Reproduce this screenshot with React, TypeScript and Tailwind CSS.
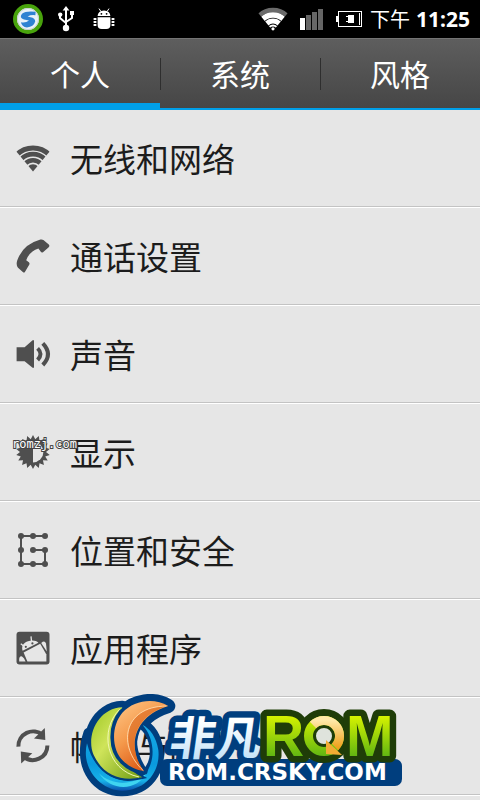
import { useState } from 'react';
import type { ReactNode } from 'react';

type rowType = {
  title: string;
  icon: ReactNode;
};

const tabs = ['个人', '系统', '风格'];

const sunPoints = Array.from({ length: 36 }, (_, i) => {
  const r = i % 2 === 0 ? 17 : 13;
  const a = (i * Math.PI) / 18 - Math.PI / 2;
  return `${(17 + r * Math.cos(a)).toFixed(2)},${(17 + r * Math.sin(a)).toFixed(2)}`;
}).join(' ');

const Icon = ({ children }: { children: ReactNode }) => (
  <svg viewBox="0 0 34 34" className="w-[34px] h-[34px] shrink-0 overflow-visible text-[#4f4f4f]" fill="currentColor" aria-hidden="true">
    {children}
  </svg>
);

const WifiIcon = () => (
  <Icon>
    <clipPath id="wedge">
      <path d="M17 30.5 L-3 6.6 V-4 H37 V6.6Z" />
    </clipPath>
    <g clipPath="url(#wedge)">
      <g fill="none" stroke="currentColor">
        <circle cx="17" cy="30" r="23" strokeWidth="4.8" />
        <circle cx="17" cy="30" r="16.8" strokeWidth="4.8" />
        <circle cx="17" cy="30" r="10.8" strokeWidth="4.4" />
      </g>
      <circle cx="17" cy="30" r="6.8" />
    </g>
  </Icon>
);

const PhoneIcon = () => (
  <Icon>
    <path d="M24.4 .6 Q26 0 27.4 1 L32.8 5.4 Q34 6.8 32.7 8.2 L27 13.2 Q25.6 14 24.8 12.8 L22.4 9.4 Q13.4 12.4 10.2 21.2 L12.9 23.2 Q14 24.4 13.2 25.8 L8.9 33 Q8 34 6.8 33 L2 28.8 Q-.2 26 1.2 21.6 Q6.6 5.6 24.4 .6Z" />
  </Icon>
);

const SoundIcon = () => (
  <Icon>
    <path d="M.6 10.3 H8.6 L16.6 3.2 H18 V30.8 H16.6 L8.6 24.3 H.6Z" />
    <g fill="none" stroke="currentColor">
      <path d="M21.6 11.4 Q27.4 17 21.6 23" strokeWidth="4" />
      <path d="M26.8 6.4 Q37.2 17.2 26.8 28" strokeWidth="4" />
    </g>
  </Icon>
);

const DisplayIcon = () => (
  <Icon>
    <polygon points={sunPoints} />
    <path d="M17 6.6 A10.4 10.4 0 0 1 17 27.4Z" fill="#e6e6e6" />
  </Icon>
);

const LockIcon = () => (
  <Icon>
    <path d="M17 17 H29 V31 H5 V3 H29" fill="none" stroke="currentColor" strokeWidth="2" />
    {[3, 17, 31].map((y) => [5, 17, 29].map((x) => <circle key={`${x}-${y}`} cx={x} cy={y} r="3" />))}
  </Icon>
);

const AppsIcon = () => (
  <Icon>
    <rect x=".5" y=".8" width="33" height="32.6" rx="3" />
    <g fill="#e6e6e6">
      <path d="M6.6 19.8 C5 14.6 8 11.4 12 10.2 C16 9 20.4 9.4 22.4 11.8Z" />
      <path d="M7.6 21.6 L24.2 12.8 L30.4 23.4 V30.4 H11.4Z" />
      <path d="M25.2 12 Q28.6 9 30 12.4 L30.8 20.6Z" />
      <path d="M3.2 30.4 Q2.6 24.8 6 25.4 Q8 26.4 9.6 30.4Z" />
    </g>
    <path d="M8.2 15.4 L4.8 12.8 M15.6 11 L15 5.4" stroke="#e6e6e6" strokeWidth="1.3" />
    <circle cx="9.8" cy="15.8" r="1.1" />
    <circle cx="16.4" cy="12.4" r="1.1" />
  </Icon>
);

const SyncIcon = () => (
  <Icon>
    <g fill="none" stroke="currentColor" strokeWidth="4">
      <path d="M2.4 17.6 A14.6 14.6 0 0 1 26.6 6" />
      <path d="M31.4 16.4 A14.6 14.6 0 0 1 7.4 27.6" />
    </g>
    <path d="M28.8 -1 L29.3 11 L18 9.6Z" />
    <path d="M5.2 34.4 L4.8 22.6 L16.3 24.2Z" />
  </Icon>
);

const rows: rowType[] = [
  { title: '无线和网络', icon: <WifiIcon /> },
  { title: '通话设置', icon: <PhoneIcon /> },
  { title: '声音', icon: <SoundIcon /> },
  { title: '显示', icon: <DisplayIcon /> },
  { title: '位置和安全', icon: <LockIcon /> },
  { title: '应用程序', icon: <AppsIcon /> },
  { title: '帐户与同步', icon: <SyncIcon /> },
];

const StatusBar = () => (
  <header className="h-[38px] bg-black text-white flex items-center justify-between pl-3 pr-[10px]">
    <div className="flex items-center">
      <svg viewBox="0 0 32 32" className="w-8 h-8" aria-hidden="true">
        <circle cx="16" cy="16" r="13" fill="#e9f1f8" stroke="#48a30c" strokeWidth="4" />
        <circle cx="16" cy="16" r="10.6" fill="none" stroke="#c9d2cf" strokeWidth="1" />
        <path d="M23.6 8.8 Q14 7.6 10 10.8 Q6.8 15 12 16.4 L17 17.4 Q13.6 20.2 9 19.2 Q9.6 23.8 15 24.4 Q21.6 24.2 23.2 18.6 Q23.2 14.8 18.6 14.2 L15.6 13.4 Q19 11.6 23.4 12.2Z" fill="#2f82d2" />
      </svg>
      <svg viewBox="0 0 16 26" className="w-4 h-[26px] ml-[14px]" fill="#fff" aria-hidden="true">
        <path d="M8 0 L11.4 4.4 H4.6Z" />
        <circle cx="8" cy="22" r="3.2" />
        <rect x="12" y="5" width="4" height="4" />
        <circle cx="2.2" cy="8.6" r="2.2" />
        <path d="M8 3 V22 M2 9 V12 L8 17 M14 8 V12 L8 16" fill="none" stroke="#fff" strokeWidth="2" />
      </svg>
      <svg viewBox="0 0 22 22" className="w-[22px] h-[22px] ml-[19px]" fill="#fff" aria-hidden="true">
        <path d="M4.6 8 Q5 3 11 2.6 Q17 3 17.4 8Z" />
        <path d="M4.6 9.2 H17.4 V17 Q17.4 21 13.4 21 H8.6 Q4.6 21 4.6 17Z" />
        <path d="M6 .6 L8 3.6 M16 .6 L14 3.6" stroke="#fff" strokeWidth="1" />
        <path d="M.6 11 H3.4 M.6 14 H3.4 M.6 17 H3.4 M18.6 11 H21.4 M18.6 14 H21.4 M18.6 17 H21.4" stroke="#fff" strokeWidth="2" />
        <circle cx="8.4" cy="5.8" r=".9" fill="#000" />
        <circle cx="13.6" cy="5.8" r=".9" fill="#000" />
      </svg>
    </div>
    <div className="flex items-center">
      <svg viewBox="0 0 30 24" className="w-[30px] h-6" aria-hidden="true">
        <clipPath id="signal">
          <path d="M15 24 L-3 2 V-4 H33 V2Z" />
        </clipPath>
        <g clipPath="url(#signal)" fill="none">
          <circle cx="15" cy="23" r="20" stroke="#6b6b6b" strokeWidth="4.4" />
          <circle cx="15" cy="23" r="15" stroke="#fff" strokeWidth="5.6" />
          <circle cx="15" cy="23" r="9" stroke="#fff" strokeWidth="5" />
          <circle cx="15" cy="23" r="4.6" stroke="#fff" strokeWidth="2" />
        </g>
        <circle cx="15" cy="21.8" r="1.6" fill="#fff" />
      </svg>
      <svg viewBox="0 0 24 22" className="w-6 h-[22px] ml-3" fill="#666" aria-hidden="true">
        <rect x="0" y="10" width="5" height="12" fill="#fff" />
        <rect x="6" y="7" width="5" height="15" />
        <rect x="12" y="4" width="5" height="18" />
        <rect x="18" y="1" width="5" height="21" />
      </svg>
      <svg viewBox="0 0 26 16" className="w-[26px] h-4 ml-3" aria-hidden="true">
        <rect x="2.5" y=".5" width="23" height="15" fill="none" stroke="#fff" />
        <rect x="0" y="5" width="2" height="6" fill="#fff" />
        <path d="M23.5 2 V14" stroke="#fff" />
        <path d="M12 4 H18 V12 H12 V11 H10 V10 H12 V6 H10 V5 H12Z" fill="#fff" />
      </svg>
      <time className="ml-2 flex items-center gap-[6px] text-[20px] leading-6 font-['Noto_Sans_CJK_SC',sans-serif]">
        <span>下午</span>
        <span className="text-[21px] font-bold font-['Noto_Sans',sans-serif]">11:25</span>
      </time>
    </div>
  </header>
);

const Logo = () => (
  <svg viewBox="0 0 326 106" className="absolute bottom-0 left-1/2 -translate-x-1/2 w-[326px] h-[106px] pointer-events-none" role="img" aria-label="非凡ROM ROM.CRSKY.COM">
    <defs>
      <linearGradient id="ring" x1="0" y1="0" x2="0" y2="1">
        <stop offset="0" stopColor="#16a9e6" />
        <stop offset=".6" stopColor="#0a9ade" />
        <stop offset=".85" stopColor="#18b2e8" />
        <stop offset="1" stopColor="#0b50ad" />
      </linearGradient>
      <linearGradient id="leaf" x1="0" y1="0" x2="1" y2="1">
        <stop offset="0" stopColor="#9cc722" />
        <stop offset=".4" stopColor="#cfe45a" />
        <stop offset="1" stopColor="#6f9c12" />
      </linearGradient>
      <linearGradient id="flame" x1="0" y1="0" x2=".6" y2="1">
        <stop offset="0" stopColor="#ffc98a" />
        <stop offset=".5" stopColor="#f59a4c" />
        <stop offset="1" stopColor="#d9520f" />
      </linearGradient>
      <linearGradient id="ice" x1="0" y1="0" x2="0" y2="1">
        <stop offset=".3" stopColor="#ffffff" />
        <stop offset="1" stopColor="#b5dcf6" />
      </linearGradient>
      <linearGradient id="lime" gradientUnits="userSpaceOnUse" x1="0" y1="20" x2="0" y2="63">
        <stop offset="0" stopColor="#dcf500" />
        <stop offset="1" stopColor="#5fb512" />
      </linearGradient>
      <linearGradient id="gold" x1="0" y1="0" x2="0" y2="1">
        <stop offset="0" stopColor="#ffe9a8" />
        <stop offset="1" stopColor="#f0a21e" />
      </linearGradient>
      <mask id="hole" maskUnits="userSpaceOnUse" x="-20" y="-20" width="380" height="380">
        <rect x="-20" y="-20" width="380" height="380" fill="#fff" />
        <path d="M182 116 C204 132 214 165 212 195 C210 212 204 224 199 231 C180 200 164 156 182 116Z" fill="#000" />
      </mask>
    </defs>

    {/* swirl */}
    <g transform="translate(2 -4) scale(.33333)">
      <g mask="url(#hole)" fill="#003e7e" stroke="#003e7e" strokeLinejoin="round">
        <path d="M30 130 C-5 235 60 305 130 302 C205 300 245 240 236 180 C230 140 212 115 190 104 C225 150 225 235 170 260 C110 285 45 240 30 130Z" strokeWidth="34" />
        <path d="M130 52 C55 55 20 140 44 195 C75 260 130 275 190 262 C120 225 75 150 130 52Z" strokeWidth="40" />
        <path d="M268 48 C225 22 165 30 130 68 C95 110 98 180 132 212 C150 230 170 240 195 243 C150 185 150 85 268 48Z" strokeWidth="42" />
      </g>
      <path d="M24 160 C5 235 65 302 130 302 C205 300 245 240 238 180 C232 140 212 115 190 104 C232 150 230 225 190 262 C140 290 50 265 24 160Z" fill="url(#ring)" />
      <path d="M60 250 C100 290 170 286 205 246 C176 304 96 306 60 250Z" fill="#3fd4f0" />
      <path d="M130 52 C55 55 20 140 44 195 C75 260 130 275 190 262 C120 225 75 150 130 52Z" fill="url(#leaf)" stroke="#003e7e" strokeWidth="10" />
      <path d="M130 52 C55 55 20 140 44 195 C75 260 130 275 190 262 C120 225 75 150 130 52Z" fill="url(#leaf)" />
      <path d="M122 58 C60 120 80 240 180 261" fill="none" stroke="#f0f7b4" strokeWidth="3" />
      <path d="M195 243 C170 240 150 230 132 212 C98 180 95 110 130 68" fill="none" stroke="#003e7e" strokeWidth="22" strokeLinecap="round" />
      <path d="M195 243 C150 185 150 85 268 48" fill="none" stroke="#003e7e" strokeWidth="14" />
      <path d="M268 48 C225 22 165 30 130 68 C95 110 98 180 132 212 C150 230 170 240 195 243 C150 185 150 85 268 48Z" fill="url(#flame)" />
      <path d="M262 49 C130 50 120 170 193 241 C150 185 150 85 262 49Z" fill="#d8661d" opacity=".6" />
      <path d="M262 48 C130 50 115 170 193 242" fill="none" stroke="#ffe0b5" strokeWidth="2.5" />
    </g>

    <rect x="83" y="65" width="242" height="27" rx="7" fill="#003e7e" />

    <g transform="translate(91 61) skewX(-8)" fontFamily="'Noto Sans CJK SC', sans-serif" fontWeight="700" fontSize="46" strokeLinejoin="round">
      <text x="0" y="0" fill="url(#ice)" stroke="#003e7e" strokeWidth="13" paintOrder="stroke">非凡</text>
    </g>

    <circle cx="247" cy="42" r="20" fill="#1f3d08" stroke="#1f3d08" strokeWidth="14" />
    <g fontFamily="'Liberation Sans', sans-serif" fontWeight="700" fontSize="57" strokeLinejoin="round" fill="url(#lime)" stroke="#1f3d08" strokeWidth="13" paintOrder="stroke">
      <text x="186" y="62">R</text>
      <text x="269" y="62">M</text>
    </g>
    <circle cx="247" cy="42" r="11" fill="#dfe3dc" />
    <circle cx="247" cy="42" r="10" fill="none" stroke="#1f3d08" strokeWidth="4" />
    <circle cx="247" cy="42" r="15.5" fill="none" stroke="url(#lime)" strokeWidth="9" />
    <path d="M236 31 A15.5 15.5 0 0 1 258 53" fill="none" stroke="url(#gold)" strokeWidth="9" />
    <path d="M249 46 L265 61 L249 60Z" fill="#f3ac33" />

    <text x="91" y="86" fill="#fff" fontFamily="'DejaVu Sans', sans-serif" fontWeight="700" fontSize="23">ROM.CRSKY.COM</text>
  </svg>
);

const App = () => {
  const [activeTab, setActiveTab] = useState(0);

  return (
    <div className="relative min-h-screen overflow-hidden bg-[#e6e6e6] font-['Noto_Sans_CJK_SC',sans-serif]">
      <StatusBar />

      <nav className="h-[72px] flex items-stretch border-t border-[#747474] border-b-2 border-b-[#009fe8] bg-linear-to-b from-[#5e5e5e] to-[#464646]" role="tablist">
        {tabs.map((tab, i) => (
          <button
            key={tab}
            role="tab"
            aria-selected={i === activeTab}
            onClick={() => setActiveTab(i)}
            className="relative flex-1 flex items-center justify-center pb-[2px] text-[30px] leading-9 text-white"
          >
            {tab}
            {i > 0 && <span className="absolute left-0 top-[19px] h-8 w-px bg-[#2e2e2e]" />}
            {i === activeTab && <span className="absolute inset-x-0 bottom-0 h-[5px] bg-[#009fe8]" />}
          </button>
        ))}
      </nav>

      <ul>
        {rows.map((row) => (
          <li key={row.title} className="relative border-b border-white">
            <button className="w-full h-[97px] flex items-center gap-5 px-4 border-b border-[#c3c3c3] text-left text-[33px] leading-10 text-[#1c1c1c]">
              {row.icon}
              <span>{row.title}</span>
            </button>
            {row.title === '显示' && (
              <span className="absolute left-3 top-8 text-[12px] leading-4 text-white font-['DejaVu_Sans_Mono',monospace] [-webkit-text-stroke:2px_#444] [paint-order:stroke]">
                romzj.com
              </span>
            )}
          </li>
        ))}
      </ul>

      <Logo />
    </div>
  );
};

export default App;
